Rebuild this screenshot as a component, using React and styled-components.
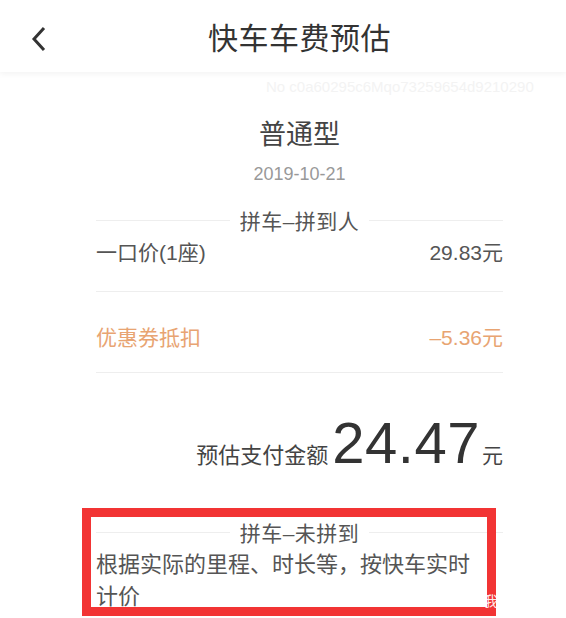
import React from 'react';
import styled, { createGlobalStyle } from 'styled-components';

const GlobalStyle = createGlobalStyle`
  html, body {
    margin: 0;
    padding: 0;
    background: #fff;
  }
  body {
    font-family: "Liberation Sans", "Noto Sans CJK SC", sans-serif;
    overflow: hidden;
  }
`;

const Page = styled.div`
  position: relative;
  width: 566px;
  height: 618px;
  overflow: hidden;
  background: #fff;
`;

const Header = styled.header`
  height: 72px;
  display: grid;
  grid-template-columns: 18px 1fr;
  align-items: center;
  padding: 0 16px 0 31px;
  box-shadow: 0 2px 6px rgba(0, 0, 0, 0.05);
  position: relative;
`;

const BackButton = styled.button`
  border: 0;
  background: none;
  padding: 0;
  margin-top: 6px;
  width: 18px;
  height: 26px;
  display: flex;
  align-items: center;
  cursor: pointer;
`;

const Title = styled.h1`
  margin: 0;
  text-align: center;
  font-size: 30px;
  font-weight: 400;
  color: #333;
  letter-spacing: 0.5px;
`;

const Serial = styled.div`
  height: 30px;
  line-height: 30px;
  font-size: 15px;
  color: #f3f3f3;
  white-space: nowrap;
  padding-left: 266px;
  overflow: hidden;
`;

const Content = styled.main`
  padding: 0 63px 0 96px;
`;

const CarType = styled.div`
  margin-top: 15px;
  text-align: center;
  font-size: 27px;
  line-height: 36px;
  color: #444;
`;

const DateText = styled.div`
  margin-top: 8px;
  text-align: center;
  font-size: 18px;
  line-height: 26px;
  color: #999;
`;

const Divider = styled.div`
  display: flex;
  align-items: center;
  gap: 10px;
  height: 30px;
  margin-top: ${p => p.$top}px;
  font-size: 21px;
  letter-spacing: 0.5px;
  color: #555;

  &::before,
  &::after {
    content: '';
    flex: 1;
    height: 1px;
    background: #eee;
  }
`;

const Row = styled.div`
  display: flex;
  justify-content: space-between;
  align-items: center;
  font-size: 21px;
  line-height: 28px;
  padding: ${p => p.$pad};
  border-bottom: 1px solid #eee;
  color: ${p => (p.$accent ? '#e8a472' : '#555')};
`;

const Total = styled.div`
  margin-top: 40px;
  display: flex;
  justify-content: flex-end;
  align-items: baseline;
  color: #333;
`;

const TotalLabel = styled.span`
  font-size: 22px;
  color: #444;
`;

const TotalAmount = styled.span`
  font-size: 58px;
  line-height: 60px;
  margin: 0 2px 0 4px;
  letter-spacing: 0.5px;
`;

const Unit = styled.span`
  font-size: 21px;
  color: #444;
`;

const NoteText = styled.p`
  margin: 2px 0 0;
  max-width: 385px;
  font-size: 22px;
  line-height: 32px;
  color: #555;
`;

const Highlight = styled.div`
  position: absolute;
  left: 82px;
  top: 508px;
  width: 414px;
  height: 108px;
  box-sizing: border-box;
  border: 9px solid #f23434;
  pointer-events: none;
`;

const Watermark = styled.span`
  position: absolute;
  left: 484px;
  top: 590px;
  font-size: 14px;
  color: #fff;
  opacity: 0.9;
`;

export default function App() {
  return (
    <Page>
      <GlobalStyle />
      <Header>
        <BackButton aria-label="返回">
          <svg width="16" height="26" viewBox="0 0 16 26">
            <path d="M13 2 L3 13 L13 24" fill="none" stroke="#333" strokeWidth="3" />
          </svg>
        </BackButton>
        <Title>快车车费预估</Title>
      </Header>
      <Serial>No c0a60295c6Mqo73259654d9210290</Serial>
      <Content>
        <CarType>普通型</CarType>
        <DateText>2019-10-21</DateText>
        <Divider $top={18}>拼车–拼到人</Divider>
        <Row $pad="4px 0 24px">
          <span>一口价(1座)</span>
          <span>29.83元</span>
        </Row>
        <Row $pad="32px 0 20px" $accent>
          <span>优惠券抵扣</span>
          <span>–5.36元</span>
        </Row>
        <Total>
          <TotalLabel>预估支付金额</TotalLabel>
          <TotalAmount>24.47</TotalAmount>
          <Unit>元</Unit>
        </Total>
        <Divider $top={44}>拼车–未拼到</Divider>
        <NoteText>根据实际的里程、时长等，按快车实时计价</NoteText>
      </Content>
      <Highlight />
      <Watermark>我</Watermark>
    </Page>
  );
}
